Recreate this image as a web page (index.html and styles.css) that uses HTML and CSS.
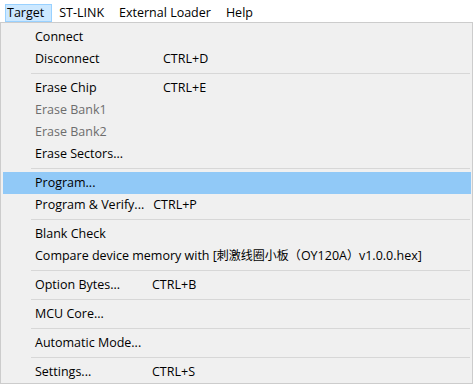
FILE: index.html
```html
<!DOCTYPE html>
<html lang="en">
<head>
    <meta charset="UTF-8">
    <meta name="viewport" content="width=device-width, initial-scale=1.0">
    <title>Target menu</title>
    <link rel="stylesheet" href="styles.css">
</head>
<body>
    <div class="menubar">
        <div class="menubar-item active">Target</div>
        <div class="menubar-item">ST-LINK</div>
        <div class="menubar-item">External Loader</div>
        <div class="menubar-item">Help</div>
    </div>

    <div class="menu">
        <div class="item"><span class="label">Connect</span></div>
        <div class="item"><span class="label long">Disconnect</span><span class="key">CTRL+D</span></div>
        <div class="separator"></div>
        <div class="item"><span class="label long">Erase Chip</span><span class="key">CTRL+E</span></div>
        <div class="item disabled"><span class="label">Erase Bank1</span></div>
        <div class="item disabled"><span class="label">Erase Bank2</span></div>
        <div class="item"><span class="label">Erase Sectors...</span></div>
        <div class="separator"></div>
        <div class="item selected"><span class="label">Program...</span></div>
        <div class="item"><span class="label">Program &amp; Verify...</span><span class="key">CTRL+P</span></div>
        <div class="separator"></div>
        <div class="item"><span class="label">Blank Check</span></div>
        <div class="item"><span class="label">Compare device memory with [<span class="cjk">刺激线圈小板（</span>OY120A<span class="cjk">）</span>v1.0.0.hex]</span></div>
        <div class="separator"></div>
        <div class="item"><span class="label short">Option Bytes...</span><span class="key">CTRL+B</span></div>
        <div class="separator"></div>
        <div class="item"><span class="label">MCU Core...</span></div>
        <div class="separator"></div>
        <div class="item"><span class="label">Automatic Mode...</span></div>
        <div class="separator"></div>
        <div class="item"><span class="label short">Settings...</span><span class="key">CTRL+S</span></div>
    </div>
</body>
</html>
```

FILE: styles.css
```css
body {
    margin: 0;
    background: #fff;
    font-family: "Open Sans", "Noto Sans CJK SC", sans-serif;
    font-size: 12.5px;
    color: #000;
}
.menubar {
    height: 22px;
    display: flex;
    align-items: flex-end;
    padding-left: 5px;
}
.menubar-item {
    height: 16px;
    line-height: 16px;
    padding: 0 7px 0 1px;
    margin-right: 5px;
    border: 1px solid transparent;
}
.menubar-item.active {
    background: #cce8ff;
    border-color: #99d1ff;
}
.menu {
    width: 471px;
    height: 357px;
    padding: 3px 0 0 0;
    background: #f0f0f0;
    border: 1px solid #cccccc;
    box-sizing: content-box;
}
.item {
    height: 22px;
    line-height: 22px;
    margin: 0 1px 0 2px;
    padding-left: 32px;
    display: flex;
    white-space: nowrap;
}
.item.selected {
    background: #91c9f7;
}
.item.disabled {
    color: #6d6d6d;
}
.cjk {
    font-size: 12px;
}
.label.long {
    min-width: 119px;
}
.label.short {
    min-width: 108px;
}
.key {
    margin-left: 9px;
}
.separator {
    height: 7px;
    margin: 0 2px 0 30px;
    display: flex;
    align-items: center;
}
.separator::before {
    content: "";
    flex: 1;
    height: 1px;
    background: #d7d7d7;
}
```
